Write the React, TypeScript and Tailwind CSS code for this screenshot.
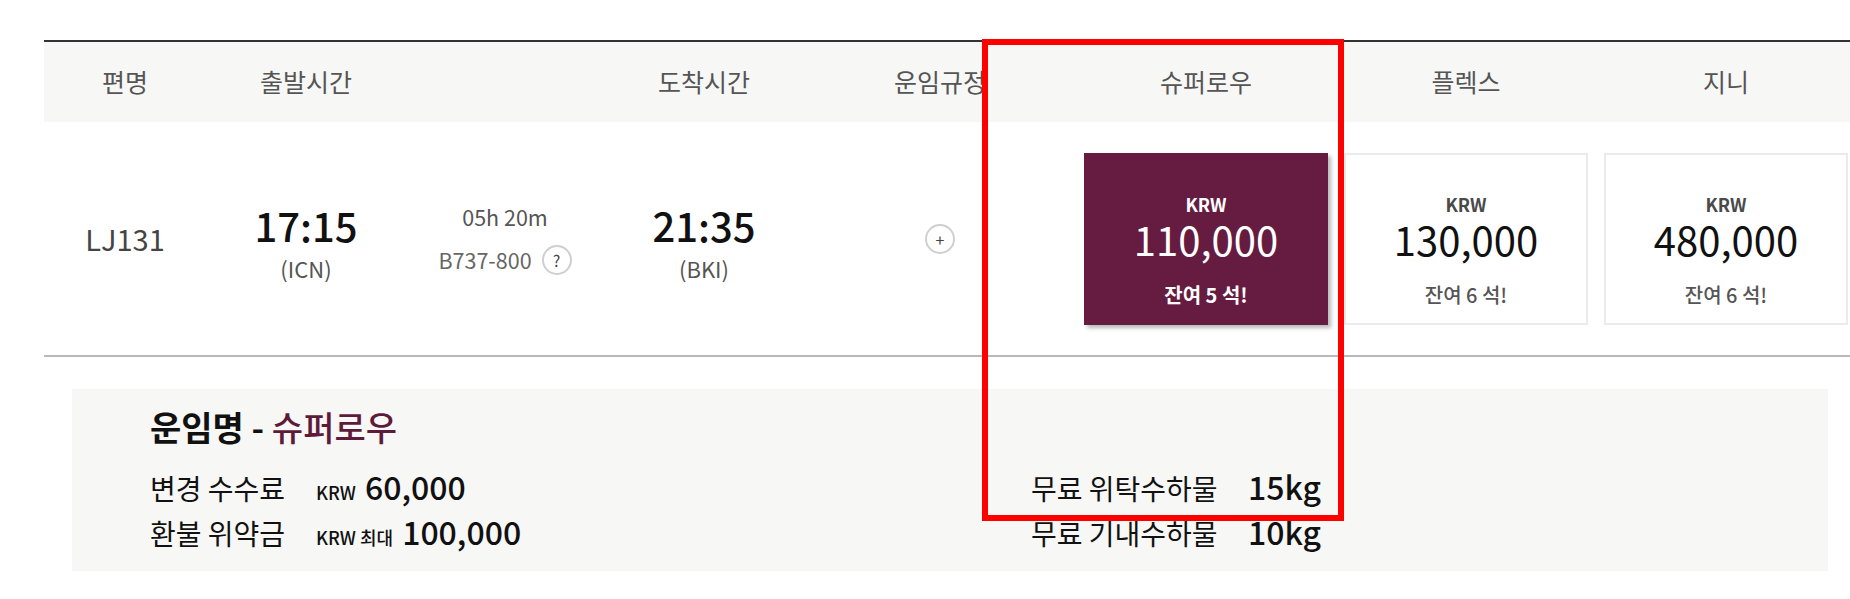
import React from "react";

const fares = [
  { name: "슈퍼로우", price: "110,000", seats: 5, selected: true },
  { name: "플렉스", price: "130,000", seats: 6, selected: false },
  { name: "지니", price: "480,000", seats: 6, selected: false },
];

function CircleMark({ children }: { children: React.ReactNode }) {
  return (
    <span className="inline-flex h-[30px] w-[30px] items-center justify-center rounded-full border-2 border-[#cfcfcf] text-[16px] leading-none text-[#444]">
      {children}
    </span>
  );
}

function FareBox({ price, seats, selected }: { price: string; seats: number; selected: boolean }) {
  return (
    <div className="flex justify-center">
      <div
        className={
          selected
            ? "flex h-[172px] w-[244px] flex-col items-center bg-[#651c40] pt-[44px] text-white shadow-[3px_3px_4px_rgba(0,0,0,0.28)]"
            : "flex h-[172px] w-[244px] flex-col items-center border-2 border-[#ebebeb] bg-white pt-[42px] text-[#111]"
        }
      >
        <p className={selected ? "text-[18px] font-bold leading-[14px] text-white" : "text-[18px] font-bold leading-[14px] text-[#4a4a4a]"}>KRW</p>
        <p className="mt-[14px] text-[40px] leading-[28px]">{price}</p>
        <p className={selected ? "mt-[30px] text-[20px] font-bold leading-[24px] text-white" : "mt-[30px] text-[20px] font-medium leading-[24px] text-[#555]"}>
          잔여 {seats} 석!
        </p>
      </div>
    </div>
  );
}

export default function App() {
  const cols = "grid grid-cols-[162px_200px_198px_200px_272px_260px_260px_260px]";

  return (
    <div
      className="relative h-[599px] w-[1850px] overflow-hidden bg-white"
      style={{ fontFamily: '"Noto Sans CJK KR", "Noto Sans", sans-serif' }}
    >
      <div className="ml-[44px] w-[1812px] pt-[40px]">
        <div className="border-t-2 border-[#333]">
          {/* header */}
          <div className={`${cols} h-[80px] items-center bg-[#f7f7f5] text-center text-[25px] text-[#555]`}>
            <p>편명</p>
            <p>출발시간</p>
            <p></p>
            <p>도착시간</p>
            <p>운임규정</p>
            {fares.map((f) => (
              <p key={f.name}>{f.name}</p>
            ))}
          </div>

          {/* flight row */}
          <div className={`${cols} h-[235px] items-center border-b-2 border-[#b8b8b8] text-center`}>
            <p className="text-[29px] text-[#444]">LJ131</p>
            <div className="flex flex-col items-center pt-[6px]">
              <p className="text-[40px] font-medium leading-[48px] text-[#111]">17:15</p>
              <p className="mt-[4px] text-[22px] leading-[30px] text-[#555]">(ICN)</p>
            </div>
            <div className="flex flex-col items-center pt-[2px] text-[21.5px] text-[#555]">
              <p className="leading-[28px]">05h 20m</p>
              <div className="mt-[13px] flex items-center gap-[10px]">
                <span className="text-[#666]">B737-800</span>
                <CircleMark>?</CircleMark>
              </div>
            </div>
            <div className="flex flex-col items-center pt-[6px]">
              <p className="text-[40px] font-medium leading-[48px] text-[#111]">21:35</p>
              <p className="mt-[4px] text-[22px] leading-[30px] text-[#555]">(BKI)</p>
            </div>
            <div className="flex justify-center">
              <CircleMark>+</CircleMark>
            </div>
            {fares.map((f) => (
              <FareBox key={f.name} price={f.price} seats={f.seats} selected={f.selected} />
            ))}
          </div>
        </div>

        {/* fare detail */}
        <div className="mx-[28px] mt-[32px] h-[182px] bg-[#f7f7f5] pl-[78px] pt-[18px]">
          <p className="text-[34px] font-bold leading-[40px] text-[#111]">
            운임명 - <span className="font-medium text-[#5e1a3b]">슈퍼로우</span>
          </p>
          <div className="mt-[17px] text-[#111]">
            <div className="flex h-[45px] items-baseline">
              <div className="flex w-[881px] items-baseline">
                <span className="w-[166px] text-[28px] leading-[45px]">변경 수수료</span>
                <span className="mr-[9px] text-[18px] font-medium">KRW</span>
                <span className="text-[32px] font-medium leading-[45px]">60,000</span>
              </div>
              <span className="w-[217px] text-[28px] leading-[45px]">무료 위탁수하물</span>
              <span className="text-[32px] font-medium leading-[45px]">15kg</span>
            </div>
            <div className="flex h-[45px] items-baseline">
              <div className="flex w-[881px] items-baseline">
                <span className="w-[166px] text-[28px] leading-[45px]">환불 위약금</span>
                <span className="mr-[9px] text-[18px] font-medium">KRW 최대</span>
                <span className="text-[32px] font-medium leading-[45px]">100,000</span>
              </div>
              <span className="w-[217px] text-[28px] leading-[45px]">무료 기내수하물</span>
              <span className="text-[32px] font-medium leading-[45px]">10kg</span>
            </div>
          </div>
        </div>
      </div>

      {/* highlight annotation */}
      <div className="pointer-events-none absolute left-[982px] top-[39px] h-[482px] w-[362px] border-[6px] border-[#ff0000]" />
    </div>
  );
}
